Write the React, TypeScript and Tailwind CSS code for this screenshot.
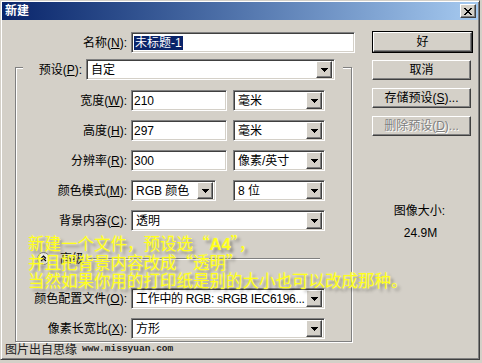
import React from 'react';

const sunken =
  'bg-white border border-t-[#808080] border-l-[#808080] border-r-white border-b-white shadow-[inset_1px_1px_0_#404040,inset_-1px_-1px_0_#d4d0c8]';
const raised =
  'bg-[#d4d0c8] border border-t-white border-l-white border-r-[#404040] border-b-[#404040] shadow-[inset_-1px_-1px_0_#808080]';
const etched = 'border border-[#808080] shadow-[1px_1px_0_#fff,inset_1px_1px_0_#fff]';

const Arrow: React.FC = () => (
  <div className={`${raised} w-[16px] h-[17px] flex items-center justify-center shrink-0`}>
    <svg width="7" height="4" viewBox="0 0 7 4" shapeRendering="crispEdges">
      <rect x="0" y="0" width="7" height="1" fill="#000" />
      <rect x="1" y="1" width="5" height="1" fill="#000" />
      <rect x="2" y="2" width="3" height="1" fill="#000" />
      <rect x="3" y="3" width="1" height="1" fill="#000" />
    </svg>
  </div>
);

const Select: React.FC<{ value: string; w: string; tight?: boolean }> = ({ value, w, tight }) => (
  <div className={`${sunken} ${w} h-[21px] flex items-center pl-[4px] pr-[2px] shrink-0`}>
    <span className={`flex-1 overflow-hidden whitespace-nowrap ${tight ? 'tracking-[-0.3px]' : ''}`}>{value}</span>
    <Arrow />
  </div>
);

const Field: React.FC<{ value: string; w: string }> = ({ value, w }) => (
  <div className={`${sunken} ${w} h-[21px] flex items-center pl-[2px] shrink-0`}>{value}</div>
);

const Label: React.FC<{ t: string; k: string; w: string }> = ({ t, k, w }) => (
  <div className={`${w} text-right whitespace-nowrap shrink-0`}>
    {t}(<span className="underline">{k}</span>):
  </div>
);

const Button: React.FC<{ children: React.ReactNode; disabled?: boolean }> = ({ children, disabled }) => (
  <div
    className={`${raised} w-[99px] h-[20px] flex items-center justify-center ${
      disabled ? 'text-[#808080] [text-shadow:1px_1px_0_#fff]' : ''
    }`}
  >
    {children}
  </div>
);

export default function App() {
  return (
    <div className="w-[482px] h-[363px] bg-[#d4d0c8] relative overflow-hidden text-[12px] leading-[14px] text-black font-['Liberation_Sans','Noto_Sans_CJK_SC',sans-serif]">
      <div className="w-[480px] h-[360px] border border-t-[#d4d0c8] border-l-[#d4d0c8] border-r-[#404040] border-b-[#404040] shadow-[inset_1px_1px_0_#fff,inset_-1px_-1px_0_#808080] p-[1px]">
        {/* title bar */}
        <div className="h-[18px] flex items-center justify-between pl-[3px] pr-[2px] bg-gradient-to-r from-[#0a246a] to-[#a6caf0]">
          <span className="text-white font-bold">新建</span>
          <div className={`${raised} w-[16px] h-[14px] flex items-center justify-center`}>
            <svg width="8" height="7" viewBox="0 0 8 7" shapeRendering="crispEdges">
              <path d="M0 0h2l2 2.5 2-2.5h2l-3 3.5 3 3.5h-2l-2-2.5-2 2.5h-2l3-3.5z" fill="#000" />
            </svg>
          </div>
        </div>

        {/* body */}
        <div className="flex items-start">
          {/* left column */}
          <div className="pt-[12px]">
            <div className="flex items-center">
              <Label t="名称" k="N" w="w-[125px]" />
              <div className={`${sunken} ml-[4px] w-[224px] h-[21px] flex items-center pl-[2px]`}>
                <span className="bg-[#0a246a] text-white px-[1px]">未标题-1</span>
              </div>
            </div>

            <div className={`${etched} ml-[13px] mt-[14px] w-[337px] h-[275px]`}>
              {/* preset header sitting on the frame */}
              <div className="-mt-[9px] ml-[7px] w-[320px] pr-[8px] bg-[#d4d0c8] flex items-center">
                <Label t="预设" k="P" w="w-[59px]" />
                <div className="ml-[4px]">
                  <Select value="自定" w="w-[249px]" />
                </div>
              </div>

              <div className="mt-[10px] flex flex-col gap-[9px]">
                <div className="flex items-center">
                  <Label t="宽度" k="W" w="w-[111px]" />
                  <div className="ml-[4px] flex gap-[6px]">
                    <Field value="210" w="w-[96px]" />
                    <Select value="毫米" w="w-[92px]" />
                  </div>
                </div>
                <div className="flex items-center">
                  <Label t="高度" k="H" w="w-[111px]" />
                  <div className="ml-[4px] flex gap-[6px]">
                    <Field value="297" w="w-[96px]" />
                    <Select value="毫米" w="w-[92px]" />
                  </div>
                </div>
                <div className="flex items-center">
                  <Label t="分辨率" k="R" w="w-[111px]" />
                  <div className="ml-[4px] flex gap-[6px]">
                    <Field value="300" w="w-[96px]" />
                    <Select value="像素/英寸" w="w-[92px]" />
                  </div>
                </div>
                <div className="flex items-center">
                  <Label t="颜色模式" k="M" w="w-[111px]" />
                  <div className="ml-[4px] flex gap-[17px]">
                    <Select value="RGB 颜色" w="w-[85px]" />
                    <Select value="8 位" w="w-[92px]" />
                  </div>
                </div>
                <div className="flex items-center">
                  <Label t="背景内容" k="C" w="w-[111px]" />
                  <div className="ml-[4px]">
                    <Select value="透明" w="w-[194px]" />
                  </div>
                </div>
              </div>

              {/* advanced */}
              <div className="mt-[20px] h-[15px] flex items-center">
                <div className="ml-[21px] w-[13px] h-[13px] rounded-full bg-[#f4f3ee] border border-[#808080] flex items-center justify-center">
                  <svg width="7" height="7" viewBox="0 0 7 7">
                    <path d="M1 3.5l2.5-2.5 2.5 2.5M1 6l2.5-2.5 2.5 2.5" stroke="#000" strokeWidth="1.2" fill="none" />
                  </svg>
                </div>
                <span className="ml-[10px]">高级</span>
                <div className="ml-[4px] w-[232px] h-0 border-t border-[#808080] shadow-[0_1px_0_#fff]" />
              </div>

              <div className="mt-[22px] flex flex-col gap-[9px]">
                <div className="flex items-center">
                  <Label t="颜色配置文件" k="O" w="w-[111px]" />
                  <div className="ml-[4px]">
                    <Select value="工作中的 RGB: sRGB IEC6196..." w="w-[194px]" tight />
                  </div>
                </div>
                <div className="flex items-center">
                  <Label t="像素长宽比" k="X" w="w-[111px]" />
                  <div className="ml-[4px]">
                    <Select value="方形" w="w-[194px]" />
                  </div>
                </div>
              </div>
            </div>
          </div>

          {/* right column */}
          <div className="ml-[17px] pt-[11px] flex flex-col">
            <div className="border border-black">
              <Button>好</Button>
            </div>
            <div className="mt-[7px]">
              <Button>取消</Button>
            </div>
            <div className="mt-[8px]">
              <Button>
                存储预设(<span className="underline">S</span>)...
              </Button>
            </div>
            <div className="mt-[8px]">
              <Button disabled>
                删除预设(<span className="underline">D</span>)...
              </Button>
            </div>
            <div className="mt-[68px] w-[99px] text-center pr-[4px]">图像大小:</div>
            <div className="mt-[8px] w-[99px] text-center pr-[2px]">24.9M</div>
          </div>
        </div>
      </div>

      {/* yellow annotation over the dialog */}
      <div className="absolute left-[28px] top-[234px] text-[16.5px] leading-[18px] text-[#ffff1a] whitespace-nowrap font-['Noto_Sans_CJK_SC',sans-serif] [text-shadow:0_0_2px_#f6f6a0,3px_3px_3px_rgba(0,0,0,0.35)]">
        <div>
          新建一个文件，预设选“<span className="font-bold font-['Liberation_Sans',sans-serif]">A4</span>”，
        </div>
        <div>并且把背景内容改成“透明”</div>
        <div>当然如果你用的打印纸是别的大小也可以改成那种。</div>
      </div>

      {/* watermark */}
      <div className="absolute left-[5px] top-[342px] flex items-center gap-[5px] text-[#222]">
        <span className="text-[12px] font-['Noto_Sans_CJK_SC',sans-serif]">图片出自思缘</span>
        <span className="text-[9.5px] font-bold font-['Liberation_Mono',monospace]">www.missyuan.com</span>
      </div>
    </div>
  );
}
